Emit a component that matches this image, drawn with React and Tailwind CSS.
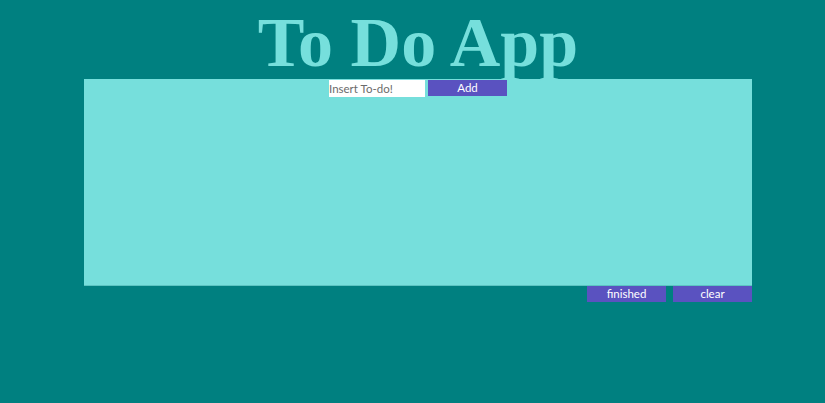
import React, { useState } from 'react';

function App() {
  const [text, setText] = useState('');

  return (
    <div className="min-h-[403px] w-full bg-[#008080]">
      <div className="ml-[84px] w-[668px]">
        <h1 className="h-[79px] pt-[3px] text-center text-[70px] font-bold leading-[80px] text-[#76dfdc] [font-family:'Liberation_Serif',serif]">
          To Do App
        </h1>

        {/* List panel */}
        <div className="h-[207px] border-b border-[#5cc4c2] bg-[#76dfdc]">
          <div className="flex items-start justify-center gap-[3px] pt-px">
            <input
              type="text"
              placeholder="Insert To-do!"
              value={text}
              onChange={(e) => setText(e.target.value)}
              className="h-[17px] w-[96px] bg-white px-0 text-[11.5px] text-gray-700 placeholder:text-[#6b6b6b] outline-none [font-family:Lato,sans-serif]"
            />
            <button className="h-[16px] w-[79px] bg-[#5a52c0] text-[11.5px] leading-[16px] text-white [font-family:Lato,sans-serif]">
              Add
            </button>
          </div>
        </div>

        <div className="flex justify-end gap-[7px]">
          <button className="h-[16px] w-[79px] bg-[#5a52c0] text-[11.5px] leading-[16px] text-white [font-family:Lato,sans-serif]">
            finished
          </button>
          <button className="h-[16px] w-[79px] bg-[#5a52c0] text-[11.5px] leading-[16px] text-white [font-family:Lato,sans-serif]">
            clear
          </button>
        </div>
      </div>
    </div>
  );
}

export default App;
